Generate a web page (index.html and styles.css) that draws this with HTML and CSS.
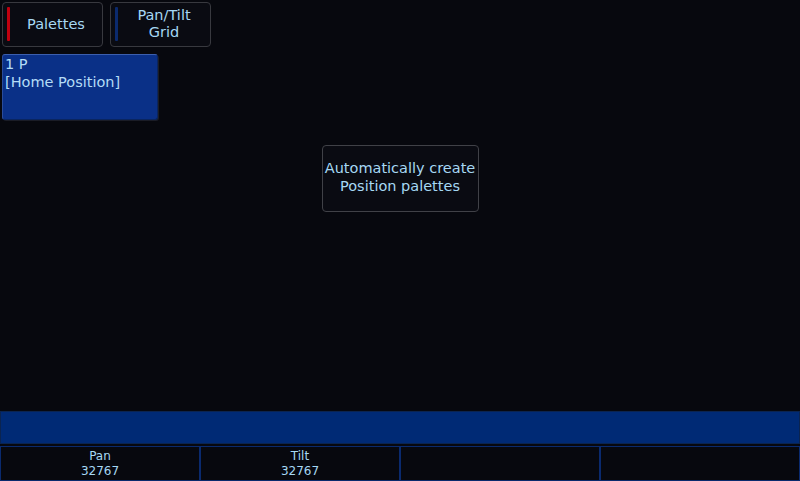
FILE: index.html
```html
<!DOCTYPE html>
<html>
<head>
<meta charset="utf-8">
<link rel="stylesheet" href="styles.css">
</head>
<body>
<div class="toolbar">
  <div class="tab"><span class="mark red"></span><span class="tab-label">Palettes</span></div>
  <div class="tab"><span class="mark blue"></span><span class="tab-label">Pan/Tilt<br>Grid</span></div>
</div>
<div class="palettes">
  <div class="palette">1 P<br>[Home Position]</div>
</div>
<div class="main">
  <div class="action">Automatically create<br>Position palettes</div>
</div>
<div class="bar"></div>
<div class="cells">
  <div class="cell">Pan<br>32767</div>
  <div class="cell">Tilt<br>32767</div>
  <div class="cell"></div>
  <div class="cell"></div>
</div>
</body>
</html>
```
FILE: styles.css
```css
html, body {
  margin: 0;
  padding: 0;
}
body {
  width: 800px;
  height: 481px;
  background: #07080e;
  font-family: "DejaVu Sans", sans-serif;
  font-size: 14.5px;
  color: #a6d8f4;
  display: flex;
  flex-direction: column;
  overflow: hidden;
}
.toolbar {
  display: flex;
  gap: 7px;
  padding: 2px 0 0 2px;
}
.tab {
  box-sizing: border-box;
  width: 101px;
  height: 45px;
  background: #0a0b12;
  border: 1px solid #38393f;
  border-radius: 4px;
  display: flex;
  align-items: center;
  position: relative;
}
.mark {
  position: absolute;
  left: 4px;
  top: 4px;
  width: 3px;
  height: 34px;
  border-radius: 1px;
}
.mark.red { background: #c0000f; }
.mark.blue { background: #0b2a6e; }
.tab-label {
  flex: 1;
  text-align: center;
  line-height: 17px;
  padding-left: 7px;
  margin-top: -1px;
}
.palettes {
  padding: 7px 0 0 2px;
}
.palette {
  box-sizing: border-box;
  width: 156px;
  height: 66px;
  background: #0a3087;
  border: 1px solid #0a2560;
  border-top-color: #3c5fae;
  border-left-color: #2a4c9a;
  border-radius: 3px;
  box-shadow: 1px 1px 0 #1a1c26;
  padding: 0 0 0 2px;
  line-height: 18px;
  color: #b4dcf6;
}
.main {
  flex: 1;
  display: flex;
  justify-content: center;
  align-items: flex-start;
  padding-top: 25px;
}
.action {
  box-sizing: border-box;
  width: 157px;
  height: 67px;
  background: #0a0b12;
  border: 1px solid #404147;
  border-radius: 4px;
  display: flex;
  align-items: center;
  justify-content: center;
  text-align: center;
  line-height: 18px;
  padding-bottom: 3px;
}
.bar {
  height: 33px;
  box-sizing: border-box;
  background: #002a75;
  border: 1px solid #0b2450;
}
.cells {
  display: flex;
  margin-top: 2px;
  height: 35px;
}
.cell {
  box-sizing: border-box;
  width: 200px;
  border: 1px solid #0a2a6e;
  text-align: center;
  font-size: 12px;
  line-height: 15px;
  padding-top: 2px;
}
```
